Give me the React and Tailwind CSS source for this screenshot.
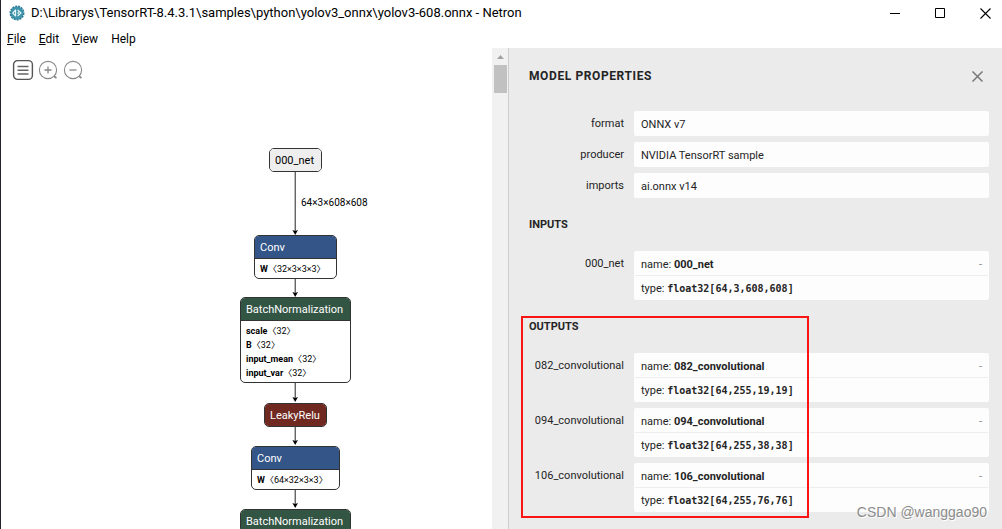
const ui = "font-['Roboto','Noto_Sans_CJK_SC',sans-serif]";

function AppLogo() {
  return (
    <svg className="size-4" viewBox="0 0 16 16" aria-hidden="true">
      <circle cx="8" cy="8" r="6.6" fill="#3d94ab" />
      <circle cx="8" cy="8" r="6.8" fill="none" stroke="#317c96" strokeWidth="1.4" strokeDasharray="2 1" />
      <path d="M6.6 5v6L3.8 8zM8.6 5l3.4 3-3.4 3" fill="none" stroke="#e8f5f8" strokeWidth="1.1" strokeLinejoin="round" />
      <path d="M9.2 7v2" stroke="#e8f5f8" strokeWidth="1.2" />
    </svg>
  );
}

function TitleBar() {
  return (
    <header className="flex h-[26px] shrink-0 items-center pr-[11px] pl-2">
      <AppLogo />
      <h1 className="ml-[6px] grow truncate text-[13px] leading-5 text-black">
        D:\Librarys\TensorRT-8.4.3.1\samples\python\yolov3_onnx\yolov3-608.onnx - Netron
      </h1>
      <div className="flex gap-[34px]">
        <button type="button" aria-label="Minimize">
          <svg className="size-[11px]" viewBox="0 0 11 11" stroke="#000" fill="none"><path d="M0 5.5h10" /></svg>
        </button>
        <button type="button" aria-label="Maximize">
          <svg className="size-[11px]" viewBox="0 0 11 11" stroke="#000" fill="none"><path d="M.5.5h9v9h-9z" /></svg>
        </button>
        <button type="button" aria-label="Close window">
          <svg className="size-[11px]" viewBox="0 0 11 11" stroke="#000" strokeWidth="1.1" fill="none"><path d="M.5.5l10 10M10.5.5l-10 10" /></svg>
        </button>
      </div>
    </header>
  );
}

function MenuBar() {
  const item = "leading-[18px]";
  return (
    <nav className="flex h-[22px] shrink-0 items-end gap-[13px] pl-[6px] text-[12px] text-black">
      <button type="button" className={item}><u>F</u>ile</button>
      <button type="button" className={item}><u>E</u>dit</button>
      <button type="button" className={item}><u>V</u>iew</button>
      <button type="button" className={item}>Help</button>
    </nav>
  );
}

function Toolbar() {
  return (
    <div className="absolute top-[11px] left-[11px] flex gap-[3px]">
      <button type="button" aria-label="Menu">
        <svg className="size-[22px]" viewBox="0 0 22 22" fill="none">
          <rect x="1.6" y="1.6" width="18.8" height="18.8" rx="4" stroke="#555" strokeWidth="1.4" />
          <path d="M5.5 7.5h11M5.5 11.2h11M5.5 15h11" stroke="#666" strokeWidth="1.4" />
        </svg>
      </button>
      <button type="button" aria-label="Zoom In">
        <svg className="size-[22px]" viewBox="0 0 22 22" fill="none" stroke="#888">
          <circle cx="11" cy="11" r="8.6" strokeWidth="1.1" />
          <path d="M17 17l2.4 2.2" strokeWidth="1.8" />
          <path d="M7.5 11h7M11 7.5v7" strokeWidth="1.3" />
        </svg>
      </button>
      <button type="button" aria-label="Zoom Out">
        <svg className="size-[22px]" viewBox="0 0 22 22" fill="none" stroke="#888">
          <circle cx="11" cy="11" r="8.6" strokeWidth="1.1" />
          <path d="M17 17l2.4 2.2" strokeWidth="1.8" />
          <path d="M7.5 11h7" strokeWidth="1.3" />
        </svg>
      </button>
    </div>
  );
}

function Node({ place, color, title, attrs }) {
  return (
    <div className={`absolute overflow-hidden rounded-[5px] border border-[#333] bg-white text-black ${place}`}>
      <div className={`h-[22px] px-[5px] text-[11px] leading-6 whitespace-nowrap ${color}`}>{title}</div>
      {attrs && (
        <div className="border-t border-[#333] px-[5px] pt-[3px] pb-[2px] text-[9px] leading-[14px] whitespace-nowrap">
          {attrs.map(([name, shape]) => (
            <div key={name}>
              <b className="font-bold">{name}</b>〈{shape}〉
            </div>
          ))}
        </div>
      )}
    </div>
  );
}

const edges = [[123, 187], [230, 249], [335, 354], [378, 397], [441, 460]];
const blue = "bg-[#335588] text-white";
const green = "bg-[#335544] text-white";
const bnAttrs = [["scale", "32"], ["B", "32"], ["input_mean", "32"], ["input_var", "32"]];

function Graph() {
  return (
    <main className="relative min-w-0 grow overflow-hidden bg-white">
      <svg className="absolute top-0 left-0 h-[481px] w-[491px]" viewBox="0 0 491 481" aria-hidden="true">
        {edges.map(([from, to]) => (
          <g key={from}>
            <path d={`M294.2 ${from}V${to - 2}`} stroke="#222" />
            <path d={`M291.4 ${to - 5}L294.2 ${to}L297 ${to - 5}L294.2 ${to - 4}z`} fill="#000" />
          </g>
        ))}
      </svg>
      <Node place="left-[268px] top-[100px] w-[53px]" color="bg-[#eeeeee] text-black" title="000_net" />
      <span className="absolute top-[148px] left-[300px] text-[10px] leading-[14px] text-black">64×3×608×608</span>
      <Node place="left-[253px] top-[187px] w-[83px]" color={blue} title="Conv" attrs={[["W", "32×3×3×3"]]} />
      <Node place="left-[239px] top-[249px] w-[111px]" color={green} title="BatchNormalization" attrs={bnAttrs} />
      <Node place="left-[263px] top-[355px] w-[63px]" color="bg-[#702921] text-white" title="LeakyRelu" />
      <Node place="left-[250px] top-[398px] w-[89px]" color={blue} title="Conv" attrs={[["W", "64×32×3×3"]]} />
      <Node place="left-[239px] top-[461px] w-[111px]" color={green} title="BatchNormalization" />
      <Toolbar />
    </main>
  );
}

function ScrollBar() {
  return (
    <div className="flex w-4 shrink-0 flex-col items-center bg-[#f1f1f1]" aria-hidden="true">
      <svg className="h-[17px] w-[13px] shrink-0" viewBox="0 0 13 17"><path d="M3 11l3.5-4 3.5 4z" fill="#a3a3a3" /></svg>
      <div className="h-7 w-[13px] bg-[#c1c1c1]" />
    </div>
  );
}

function Row({ label, children }) {
  return (
    <div className="flex gap-[10px]">
      <dt className="w-[95px] shrink-0 pt-px text-right leading-6">{label}</dt>
      <dd className="min-w-0 grow rounded-[2px] bg-[#fdfdfd]">{children}</dd>
    </div>
  );
}

function Property({ label, value }) {
  return (
    <Row label={label}>
      <div className="h-[25px] px-[7px] leading-[27px]">{value}</div>
    </Row>
  );
}

function Tensor({ name, type }) {
  return (
    <Row label={name}>
      <div className="flex h-6 justify-between px-[7px] leading-[27px]">
        <span>name: <b className="font-bold">{name}</b></span>
        <button type="button" aria-label={`Collapse ${name}`} className="mb-1 text-[#888]">-</button>
      </div>
      <div className="mx-px h-[25px] border-t border-[#eeeeee] px-[6px] leading-[26px]">
        type: <code className="font-['DejaVu_Sans_Mono',monospace] text-[10px] font-bold">{type}</code>
      </div>
    </Row>
  );
}

function Sidebar() {
  const heading = "mb-[15px] text-[11px] leading-[22px] font-bold";
  return (
    <aside className="w-[494px] shrink-0 overflow-hidden border-l border-[#cccccc] bg-[#ebebeb] pr-[13px] pl-5 text-[11px] text-[#242424]">
      <div className="mb-[7px] flex h-14 items-center justify-between">
        <h2 className="text-[12px] leading-[22px] font-bold tracking-wider">MODEL PROPERTIES</h2>
        <button type="button" aria-label="Close properties" className="mr-[6px]">
          <svg className="size-[11px]" viewBox="0 0 11 11" stroke="#777" strokeWidth="1.5" fill="none"><path d="M.5.5l10 10M10.5.5l-10 10" /></svg>
        </button>
      </div>
      <dl className="flex flex-col gap-[6px]">
        <Property label="format" value="ONNX v7" />
        <Property label="producer" value="NVIDIA TensorRT sample" />
        <Property label="imports" value="ai.onnx v14" />
      </dl>
      <section className="mt-4">
        <h3 className={heading}>INPUTS</h3>
        <dl className="flex flex-col gap-[6px]">
          <Tensor name="000_net" type="float32[64,3,608,608]" />
        </dl>
      </section>
      <section className="relative mt-4">
        <h3 className={heading}>OUTPUTS</h3>
        <dl className="flex flex-col gap-[6px]">
          <Tensor name="082_convolutional" type="float32[64,255,19,19]" />
          <Tensor name="094_convolutional" type="float32[64,255,38,38]" />
          <Tensor name="106_convolutional" type="float32[64,255,76,76]" />
        </dl>
        <div className="pointer-events-none absolute top-0 -bottom-[6px] -left-2 w-[288px] border-2 border-[#fb1414]" />
      </section>
    </aside>
  );
}

export default function App() {
  return (
    <div className={`relative flex h-screen flex-col overflow-hidden border-l border-[#20222e] bg-white ${ui}`}>
      <TitleBar />
      <MenuBar />
      <div className="flex min-h-0 grow">
        <Graph />
        <ScrollBar />
        <Sidebar />
      </div>
      <div className="pointer-events-none absolute right-[15px] bottom-[7px] font-['Liberation_Sans',sans-serif] text-[14px] leading-5 text-[#8c8c8c] [text-shadow:1px_1px_0_#ffffff]">
        CSDN @wanggao90
      </div>
    </div>
  );
}
